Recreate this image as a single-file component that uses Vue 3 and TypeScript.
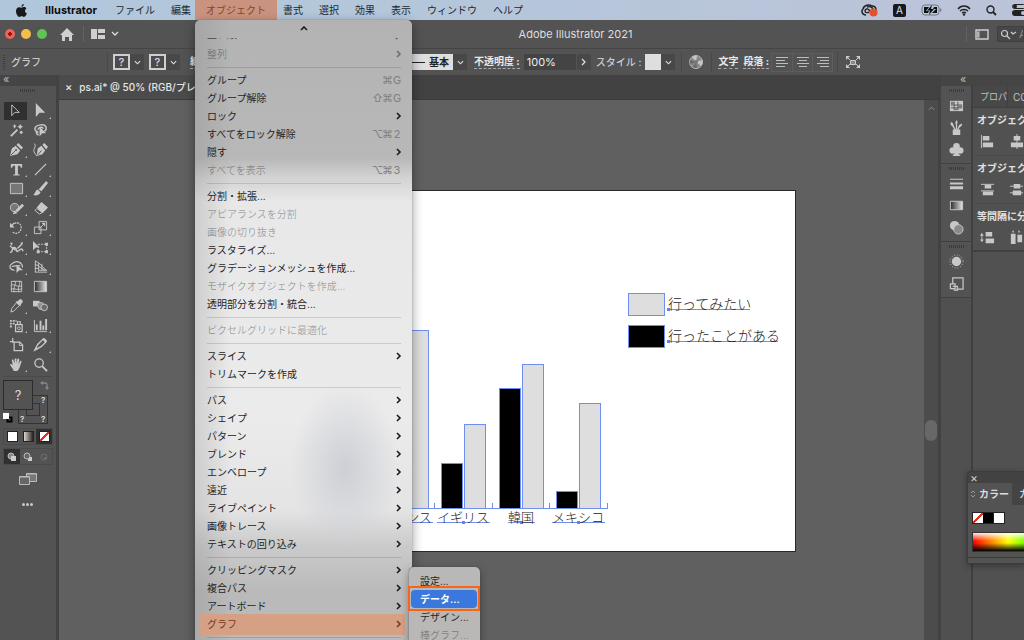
<script setup lang="ts">
interface MenuRow {
  label?: string
  keys?: string[]
  sub?: boolean
  off?: boolean
  hot?: boolean
  line?: boolean
}

const line: MenuRow = { line: true }
const rows: MenuRow[] = [
  { label: '整列', sub: true, off: true },
  line,
  { label: 'グループ', keys: ['⌘', 'G'] },
  { label: 'グループ解除', keys: ['⇧', '⌘', 'G'] },
  { label: 'ロック', sub: true },
  { label: 'すべてをロック解除', keys: ['⌥', '⌘', '2'] },
  { label: '隠す', sub: true },
  { label: 'すべてを表示', keys: ['⌥', '⌘', '3'], off: true },
  line,
  { label: '分割・拡張...' },
  { label: 'アピアランスを分割', off: true },
  { label: '画像の切り抜き', off: true },
  { label: 'ラスタライズ...' },
  { label: 'グラデーションメッシュを作成...' },
  { label: 'モザイクオブジェクトを作成...', off: true },
  { label: '透明部分を分割・統合...' },
  line,
  { label: 'ピクセルグリッドに最適化', off: true },
  line,
  { label: 'スライス', sub: true },
  { label: 'トリムマークを作成' },
  line,
  { label: 'パス', sub: true },
  { label: 'シェイプ', sub: true },
  { label: 'パターン', sub: true },
  { label: 'ブレンド', sub: true },
  { label: 'エンベロープ', sub: true },
  { label: '遠近', sub: true },
  { label: 'ライブペイント', sub: true },
  { label: '画像トレース', sub: true },
  { label: 'テキストの回り込み', sub: true },
  line,
  { label: 'クリッピングマスク', sub: true },
  { label: '複合パス', sub: true },
  { label: 'アートボード', sub: true },
  { label: 'グラフ', sub: true, hot: true },
  line,
]

const menusBefore = ['ファイル', '編集']
const menusAfter = ['書式', '選択', '効果', '表示', 'ウィンドウ', 'ヘルプ']

const f = 'fill="currentColor" stroke="none"'
interface Tool { name: string; art: string; more?: boolean }
const tools: Tool[] = [
  { name: '選択', art: '<path d="M4 2v11.500l3.200-3.500H12z"/>' },
  { name: 'ダイレクト選択', art: `<path ${f} d="M3 0v15l4-4.500H13z"/>`, more: true },
  { name: '自動選択', art: `<path stroke-width="2" d="M2 14l7-7"/><path ${f} d="M11 3l1-2 1 2 2 1-2 1-1 2-1-2-2-1zM5 3l1-2 1 2 1 0-1 1-1 2-1-2-1-1zM12 9l1-1 1 1 1 1-1 1-1 1-1-1-1-1z"/>` },
  { name: 'なげなわ', art: `<path stroke-width="1.600" d="M6 10C2 9 1 6 3 4s8-3 10-1 1 5-1 6M5 7c2-3 5-3 6-1M4 9c-1 1 0 3 2 4"/><path ${f} d="M7 4v10l3-3h4z"/>` },
  { name: 'ペン', art: `<path ${f} d="M1 15l2-8 4-3 5 5-3 4zM8 3l2-2 5 5-2 2z"/><path stroke="#535353" d="M2 14l5-5"/><circle cx="7.500" cy="8.500" r="1" fill="#535353" stroke="none"/>`, more: true },
  { name: '曲線', art: `<path ${f} d="M4 15l1-8 4-3 4 5-3 4zM10 3l2-2 4 4-2 3z"/><path stroke="#535353" d="M5 14l4-5"/><path d="M1 2c4 1-1 5 0 8s2 3 3 5"/>` },
  { name: '文字', art: `<path ${f} d="M2 2h12v4h-1.500L12 4H9.500v9l2 .5V14.500h-7V13.500l2-.5V4H4l-.5 2H2z"/>`, more: true },
  { name: '直線', art: '<path stroke-width="1.300" d="M2 14L14 2"/>', more: true },
  { name: '長方形', art: '<path fill="#777" d="M1.500 2.500h13v11h-13z"/>', more: true },
  { name: 'ブラシ', art: `<path ${f} d="M14 0l2 2-7 9-3-2zM5 9l3 3c-1 3-4 4-8 3 3-2 2-5 5-6z"/>`, more: true },
  { name: 'Shaper', art: `<circle cx="6" cy="7" r="4.500" fill="#777"/><path stroke-width="3" d="M8 11l7-7"/><path ${f} d="M6 10l3 3-5 1z"/>`, more: true },
  { name: '消しゴム', art: `<path ${f} d="M9 1l7 6-6 6-6-6z"/><path d="M4 8l-2 2 5 4 3-2z"/>`, more: true },
  { name: '回転', art: `<path stroke-dasharray="2 1" stroke-width="1.300" d="M4 13c4 3 9 0 9-5 0-3-2-5-5-5"/><path stroke-width="1.300" d="M8 3C5 3 4 4 3 6"/><path ${f} d="M1 3v5h5z"/>`, more: true },
  { name: '拡大・縮小', art: `<path d="M6.500 1.500h8v9h-8zM1.500 7.500h7v7h-7zM7 9l5-5"/><path ${f} d="M9 3h4v4z"/>`, more: true },
  { name: '線幅', art: `<path stroke-width="1.500" d="M1 13c4 1 1-6 5-5s0 7 5 3c2-2 3-2 4 1M1 6l4 4M9 9l5-5"/><path ${f} d="M1 3l3 0-1 3zM3 8h4v4zM12 3l3-1-1 3z"/>`, more: true },
  { name: '自由変形', art: `<path stroke-dasharray="2 1" d="M5.500 4.500h9v8h-9z"/><path ${f} d="M0 1v10l3-3h4zM13 3h3v3h-3zM13 11h3v3h-3zM4 11h3v3H4z"/>`, more: true },
  { name: 'シェイプ形成', art: `<path stroke-width="1.300" d="M6 12C1 12 0 8 2 6s5-4 8-3 5 4 4 6M3 8c3-1 6-1 9-1" /><path ${f} d="M8 6v9l3-3h4z"/>`, more: true },
  { name: '遠近グリッド', art: `<path d="M2.500 2v12M2 2l4 2v9M2 6l4 1M2 10h4M9.500 5v7M6 4l8 8M2 14h13M6 8l7 4M6 12h9"/>`, more: true },
  { name: 'メッシュ', art: '<path d="M2.500 2.500h11v11h-11zM2 7c4-3 7 3 12 0M2 11c4-2 7 2 12-1M6 2c3 4-3 7 0 12M11 2c2 4-3 7 0 12"/>' },
  { name: 'グラデーション', art: '<path fill="url(#toolGrad)" d="M1.500 2.500h13v11h-13z"/>' },
  { name: 'スポイト', art: `<path d="M8 5l3 3-6 6-3 1 1-4z"/><path ${f} d="M10 3c1-2 3-2 4-1s1 3-1 4l-1 3-5-5z"/>`, more: true },
  { name: 'ブレンド', art: `<path ${f} d="M0 3h7v6H0z"/><path fill="#8d8d8d" d="M5 5h5l2 2v5H7L5 9z"/><circle cx="12" cy="10" r="3.500" fill="#6b6b6b"/>` },
  { name: 'シンボルスプレー', art: `<path stroke-width="1.300" d="M7 7h7v7.500H7zM9 4h3v3H9z"/><circle cx="10.500" cy="11" r="1.500"/><path ${f} d="M1 2h2v2H1zM4 2h2v2H4zM1 5h2v2H1zM4 5h2v2H4zM1 8h2v2H1zM7 2h1v2H7z"/>`, more: true },
  { name: '棒グラフ', art: `<path d="M1.500 2v12.500H15"/><path ${f} d="M3 7h2v6H3zM7 3h2v10H7zM10 8h2v5h-2zM13 1h2v12h-2z"/>`, more: true },
  { name: 'アートボード', art: '<path stroke-width="1.300" d="M4 1v5M1 5h4M5.500 5.500h6l3 3v6h-9z" /><path d="M11 5v4h4"/>' },
  { name: 'スライス', art: `<path stroke-width="1.400" d="M2 14l3-6 6-6 3 3-5 5z"/><path ${f} d="M10 2l2-1 3 3-2 2zM1 15l2-4 2 2z"/>`, more: true },
  { name: '手のひら', art: `<path ${f} d="M5 15C4 12 2 10 1 8c1-1 2 0 3 1L3 3c1-1 2 0 2 1l1 3V2c1-1 2-1 2 0v5l1-5c1-1 2 0 2 1l-1 5 2-4c1 0 2 0 1 2l-2 6-2 3z"/>`, more: true },
  { name: 'ズーム', art: '<circle cx="6.500" cy="6.500" r="4.500" stroke-width="1.400"/><path stroke-width="2" d="M10 10l5 5"/>' },
]

const dock: { name: string; art: string }[][] = [
  [
    { name: 'スウォッチ', art: `<path ${f} d="M1 3h14v11H1z"/><path stroke="#535353" d="M5.500 4v9M9.500 4v9M2 7.500h12M2 10.500h12"/><path fill="#777" stroke="none" d="M2 4h3v3H2zM10 8h4v2h-4zM6 11h3v2H6z"/>` },
    { name: 'ブラシ', art: `<path ${f} d="M4 10h8v6H4zM2 2c3 1 3 3 3 5h-1C2 6 1 4 2 2zM8 0c2 2 1 4 0 5C6 4 7 2 8 0zM14 4c0 3-2 3-3 4l-1-1c1-2 2-3 4-3z"/><path stroke-width="1.400" d="M4 6l3 5M8 4v6M11 7l-2 4"/>` },
    { name: 'シンボル', art: `<circle ${f} cx="8" cy="4.500" r="3.500"/><circle ${f} cx="4" cy="9" r="3.500"/><circle ${f} cx="12" cy="9" r="3.500"/><path ${f} d="M7 7h2c0 4 1 6 3 7v1H4v-1c2-1 3-3 3-7z"/>` },
  ],
  [
    { name: '線', art: `<path ${f} d="M1 3h14v1H1zM1 7h14v2H1zM1 11h14v3H1z"/>` },
    { name: 'グラデーション', art: '<path fill="url(#toolGrad)" d="M1.500 3.500h13v9h-13z"/>' },
    { name: '透明', art: `<circle ${f} cx="6" cy="6" r="5"/><circle cx="10" cy="10" r="5" fill="#8a8a8a"/>` },
  ],
  [
    { name: 'アピアランス', art: `<circle ${f} cx="8" cy="8" r="5"/><circle cx="8" cy="8" r="7" stroke-dasharray="1 2"/>` },
    { name: 'アセット', art: '<path stroke-width="1.300" d="M4 8V2h11v12H8M1.500 8.500h5v5h-5zM4 11h5v4H5"/>' },
  ],
]

const alignSets = [
  {
    title: 'オブジェクトの整列',
    icons: [`<path d="M1.500 1v14"/><path ${f} d="M3 2h7v5H3zM3 9h11v5H3z"/>`, `<path d="M8.500 0v16"/><path ${f} d="M5 2h7v5H5zM2 9h13v5H2z"/>`],
  },
  {
    title: 'オブジェクトの分布',
    icons: [`<path d="M1 2.500h14M1 9.500h14"/><path ${f} d="M5 3h7v4H5zM3 10h11v4H3z"/>`, `<path d="M1 4.500h14M1 11.500h14"/><path ${f} d="M5 2h7v5H5zM4 9h9v5H4z"/>`],
  },
  {
    title: '等間隔に分布',
    icons: [`<path ${f} d="M6 2h7v5H6zM6 9h9v5H6zM0 6l2-3 2 3zM0 10l2 3 2-3z"/><path d="M2 5v6"/>`, `<path ${f} d="M2 4h5v11H2zM9 5h5v8H9zM5 0v3L3 2zM10 0v3l2-1z"/>`],
  },
]

const ground = 317
const bars: { x: number; h: number; been: boolean }[] = [
  { x: 187, h: 178, been: false },
  { x: 221, h: 45, been: true },
  { x: 244, h: 84, been: false },
  { x: 279, h: 120, been: true },
  { x: 302, h: 144, been: false },
  { x: 336, h: 17, been: true },
  { x: 359, h: 105, been: false },
]
const ticks = [214, 272, 329, 387]
const countries = [
  { name: 'フランス', x: 186, w: 53 },
  { name: 'イギリス', x: 243, w: 53 },
  { name: '韓国', x: 301, w: 27 },
  { name: 'メキシコ', x: 358, w: 53 },
]
const legend = [
  { name: '行ってみたい', y: 102, w: 82, been: false },
  { name: '行ったことがある', y: 134, w: 110, been: true },
]
</script>

<template>
  <div class="screen">
    <svg class="defs" aria-hidden="true">
      <defs>
        <linearGradient id="toolGrad"><stop offset="0" stop-color="#2b2b2b" /><stop offset="1" stop-color="#e6e6e6" /></linearGradient>
      </defs>
    </svg>

    <nav class="menubar">
      <svg class="apple" viewBox="0 0 12 14"><path d="M8.500 0c0 1.500-1 3-2.600 3C5.800 1.500 7 .3 8.500 0zM6 4c.7 0 1.500-.7 2.800-.7 1 0 2 .5 2.600 1.400-2.300 1.400-1.900 4.500.5 5.400C11.300 12 10 14 8.700 14 7.700 14 7.300 13.400 6.200 13.400 5 13.400 4.700 14 3.700 14 2 14 0 10.600 0 7.800 0 4.900 1.700 3.400 3.400 3.400 4.500 3.400 5.300 4 6 4z" /></svg>
      <button class="app">Illustrator</button>
      <button v-for="m in menusBefore" :key="m">{{ m }}</button>
      <div class="open">
        <button class="active" aria-haspopup="menu" aria-expanded="true">オブジェクト</button>
        <ul class="menu" role="menu">
          <li class="up"><svg viewBox="0 0 8 5"><path d="M1 4l3-3 3 3" /></svg></li>
          <li class="cut"><span>重ね順</span><svg class="chev" viewBox="0 0 6 8"><path d="M1 1l3 3-3 3" /></svg></li>
          <li v-for="(r, i) in rows" :key="i" :class="{ sep: r.line, off: r.off, hot: r.hot, row: !r.line }">
            <template v-if="!r.line">
              <button role="menuitem">{{ r.label }}</button>
              <svg v-if="r.sub" class="chev" viewBox="0 0 6 8"><path d="M1 1l3 3-3 3" /></svg>
              <span v-if="r.keys" class="keys"><kbd v-for="k in r.keys" :key="k">{{ k }}</kbd></span>
              <ul v-if="r.hot" class="submenu" role="menu">
                <li class="row"><button role="menuitem">設定...</button></li>
                <li class="row picked"><button role="menuitem">データ...</button></li>
                <li class="row"><button role="menuitem">デザイン...</button></li>
                <li class="row off"><button role="menuitem">棒グラフ...</button></li>
              </ul>
            </template>
          </li>
        </ul>
      </div>
      <button v-for="m in menusAfter" :key="m">{{ m }}</button>
      <div class="status">
        <svg width="17" height="14" viewBox="0 0 17 14"><path d="M5 12C1 12 0 8 2 6c1-4 6-5 9-3 2 0 4 1 4 4" fill="none" stroke="#222" stroke-width="1.500" /><path d="M8 9c-1 1-4 1-4-1s3-3 4-1l2 2M6 4c3-1 6 0 6 3" fill="none" stroke="#222" stroke-width="1.400" /><circle cx="12.500" cy="9.500" r="4" fill="#e3532b" /></svg>
        <span class="ime">A</span>
        <svg width="21" height="12" viewBox="0 0 21 12"><rect x="1" y="1" width="17" height="10" rx="3" fill="none" stroke="#6f7b89" /><path d="M3 3h5L5 7h3L7 9H3zM13 3h3v6h-5l4-4h-3z" fill="#111" /><path d="M11 1L6 6.500h3L8 11l5-6h-3z" fill="#111" /><path d="M19 4c2 1 2 3 0 4z" fill="#6f7b89" /></svg>
        <svg width="14" height="11" viewBox="0 0 14 11"><path d="M1 4c3-4 9-4 12 0M3 6c2-2 6-2 8 0M5 8c1-1 3-1 4 0" fill="none" stroke="#222" stroke-width="1.400" /><circle cx="7" cy="9.500" r="1.200" fill="#222" /></svg>
        <svg width="11" height="11" viewBox="0 0 11 11"><path d="M7 7l3 3" stroke="#222" stroke-width="1.800" /><circle cx="4.500" cy="4.500" r="3.500" fill="none" stroke="#222" stroke-width="1.400" /></svg>
        <svg width="14" height="12" viewBox="0 0 14 12"><rect x=".5" y=".5" width="13" height="4" rx="2" fill="none" stroke="#222" /><circle cx="3" cy="2.500" r="2" fill="#222" /><rect x="0" y="6" width="14" height="6" rx="3" fill="#222" /><circle cx="11" cy="9" r="2" fill="#b9c1d6" /></svg>
      </div>
    </nav>

    <header class="titlebar">
      <div class="lights"><i class="red"></i><i class="yellow"></i><i class="green"></i></div>
      <button class="home" aria-label="ホーム"><svg width="14" height="13" viewBox="0 0 14 13"><path d="M7 0l7 7h-2v6H9V9H5v4H2V7H0z" fill="#cfcfcf" /></svg></button>
      <span class="rule"></span>
      <button class="arrange" aria-label="レイアウト"><svg width="28" height="10" viewBox="0 0 28 10"><path d="M0 0h6v10H0zM7 0h7v4H7zM7 6h7v4H7z" fill="#cfcfcf" /><path d="M21 3l3 3 3-3" fill="none" stroke="#ddd" stroke-width="1.300" /></svg></button>
      <h1>Adobe Illustrator 2021</h1>
      <span class="rule"></span>
      <button class="workspace-btn" aria-label="ワークスペース"><svg width="14" height="11" viewBox="0 0 14 11"><path d="M1 1h12v9H1z" fill="none" stroke="#cfcfcf" stroke-width="1.400" /><path d="M2 2h3v7H2z" fill="#888" /><path d="M3 3v5" stroke="#ddd" /></svg></button>
      <label class="search"><svg width="17" height="11" viewBox="0 0 17 11"><circle cx="4.500" cy="4.500" r="3" fill="none" stroke="#ccc" stroke-width="1.200" /><path d="M7 7l3 3M11 3l2 2 3-2" fill="none" stroke="#ccc" stroke-width="1.300" /></svg><input placeholder="Adobe" aria-label="検索" /></label>
    </header>

    <div class="control">
      <span class="grip"></span>
      <span class="kind">グラフ</span>
      <span class="rule"></span>
      <button class="paint"><b>?</b><i><svg viewBox="0 0 8 5"><path d="M1 1l3 3 3-3" /></svg></i></button>
      <button class="paint"><b>?</b><i><svg viewBox="0 0 8 5"><path d="M1 1l3 3 3-3" /></svg></i></button>
      <div class="stroke">
        <label class="key" for="profile">線 :</label>
        <span class="profile"><span class="bar"></span><select id="profile"><option>基本</option></select><i><svg viewBox="0 0 8 5"><path d="M1 1l3 3 3-3" /></svg></i></span>
      </div>
      <label class="key" for="opacity">不透明度 :</label>
      <span class="opacity"><input id="opacity" value="100%" /><button aria-label="不透明度を開く"><svg viewBox="0 0 5 8"><path d="M1 1l3 3-3 3" /></svg></button></span>
      <span class="kind style-label">スタイル :</span>
      <button class="paint solid" aria-label="スタイル"><b></b><i><svg viewBox="0 0 8 5"><path d="M1 1l3 3 3-3" /></svg></i></button>
      <span class="rule"></span>
      <button class="globe" aria-label="オブジェクトを再配色"><svg width="14" height="14" viewBox="0 0 14 14"><circle cx="7" cy="7" r="6.500" fill="#888" stroke="#b9b9b9" /><path d="M7 7L3 2a6 6 0 0 1 5-1zM7 7l6-2a6 6 0 0 1-1 6z" fill="#c6c6c6" /><path d="M7 7L1 9a6 6 0 0 1 0-4zM7 7l1 6a6 6 0 0 1-4-1z" fill="#6a6a6a" /><circle cx="7" cy="7" r="2" fill="#777" /></svg></button>
      <span class="rule"></span>
      <button class="key">文字</button>
      <button class="key para">段落 :</button>
      <div class="aligns">
        <button aria-label="左揃え"><svg viewBox="0 0 14 12"><path d="M1 1.500h12M1 4.500h9M1 7.500h12M1 10.500h9" /></svg></button>
        <button aria-label="中央揃え"><svg viewBox="0 0 14 12"><path d="M1 1.500h12M3 4.500h8M1 7.500h12M3 10.500h8" /></svg></button>
        <button aria-label="右揃え"><svg viewBox="0 0 14 12"><path d="M1 1.500h12M4 4.500h9M1 7.500h12M4 10.500h9" /></svg></button>
      </div>
      <span class="rule"></span>
      <button class="fit" aria-label="変形"><svg width="14" height="12" viewBox="0 0 14 12"><path d="M4.500 4.500h5v4h-5z" fill="#888" stroke="#ccc" /><path d="M0 0h4L0 4zM14 0h-4l4 4zM0 12h4L0 8zM14 12h-4l4-4z" fill="#ccc" /><path d="M1 1l3 3M13 1l-3 3M1 11l3-3M13 11l-3-3" stroke="#ccc" /></svg></button>
    </div>

    <main class="work">
      <aside class="tools">
        <div class="strip">«</div>
        <div class="dots"></div>
        <div class="grid">
          <button v-for="(t, i) in tools" :key="t.name" :class="{ on: i === 0, more: t.more }" :aria-label="t.name">
            <svg class="ico" viewBox="0 0 16 16" v-html="t.art"></svg>
          </button>
        </div>
        <div class="paints">
          <span class="outline"><i></i></span>
          <span class="fill">?</span>
          <span class="q q1">?</span><span class="q q2">?</span><span class="q q3">?</span>
          <svg class="swap" viewBox="0 0 9 9"><path d="M2 2h3c2 0 2 1 2 4" fill="none" stroke="#888" stroke-width="1.300" /><path d="M0 2l3-2v4zM7 9L5 6h4z" fill="#888" /></svg>
          <svg class="reset" viewBox="0 0 10 10"><path d="M4.500 4.500h4v4h-4z" fill="none" stroke="#000" stroke-width="2" /><path d="M0 0h6v6H0z" fill="#fff" /></svg>
        </div>
        <div class="trio">
          <button aria-label="カラー"><i class="white"></i></button>
          <button aria-label="グラデーション"><i class="grad"></i></button>
          <button aria-label="なし" class="on"><i class="none"></i></button>
        </div>
        <div class="trio">
          <button aria-label="標準描画" class="on"><svg viewBox="0 0 10 10"><circle cx="4" cy="4" r="3" fill="#888" stroke="#bbb" /><path d="M4 4h5v5H4z" fill="#ccc" /></svg></button>
          <button aria-label="背面描画"><svg viewBox="0 0 10 10"><path d="M5 5h4v4H5z" fill="#ccc" /><circle cx="4" cy="4" r="3" fill="#666" stroke="#bbb" /></svg></button>
          <button aria-label="内側描画"><svg viewBox="0 0 10 10"><circle cx="5" cy="5" r="3" fill="none" stroke="#6d6d6d" /><path d="M5 5h2v2H5z" fill="#6d6d6d" /></svg></button>
        </div>
        <button class="mode" aria-label="スクリーンモード"><svg width="18" height="14" viewBox="0 0 18 14"><path d="M7.500 1.500h10v8h-10z" fill="#777" stroke="#bbb" /><path d="M.5 4.500h10v8H.5z" fill="#666" stroke="#bbb" /><path d="M7 2h11M0 5h10" stroke="#bbb" /></svg></button>
        <button class="ellipsis" aria-label="ツールバーを編集"><i></i><i></i><i></i></button>
      </aside>

      <section class="doc">
        <div class="tabs"><button class="tab"><span>×</span>ps.ai* @ 50% (RGB/プレビュー)</button></div>
        <div class="view">
          <div class="canvas">
            <div class="artboard">
              <svg width="575" height="360" viewBox="0 0 575 360">
                <g shape-rendering="crispEdges" stroke="#6f8ff0">
                  <rect v-for="b in bars" :key="b.x" :x="b.x" :y="ground - b.h" width="21" :height="b.h" :fill="b.been ? '#000' : '#dedede'" />
                  <path :d="`M0 ${ground}H388`" />
                  <path v-for="t in ticks" :key="t" :d="`M${t} ${ground}v-5`" />
                  <path v-for="c in countries" :key="c.name" :d="`M${c.x - Math.floor(c.w / 2)} 331h${c.w}`" />
                  <g v-for="l in legend" :key="l.name">
                    <rect x="408" :y="l.y" width="36" height="22" :fill="l.been ? '#000' : '#dedede'" />
                    <path :d="`M448 ${l.y + 16}h${l.w}`" />
                  </g>
                </g>
                <g fill="#5c82f5">
                  <rect v-for="c in countries" :key="c.name" :x="c.x - 1" y="330" width="3" height="3" />
                  <rect v-for="l in legend" :key="l.name" x="447" :y="l.y + 15" width="3" height="3" />
                </g>
                <text v-for="c in countries" :key="c.name" :x="c.x" y="331" text-anchor="middle" class="country">{{ c.name }}</text>
                <text v-for="l in legend" :key="l.name" x="448" :y="l.y + 16" class="legend">{{ l.name }}</text>
              </svg>
            </div>
          </div>
          <div class="scroll"><svg viewBox="0 0 8 5"><path d="M1 4l3-3 3 3" /></svg><i></i></div>
        </div>
      </section>

      <aside class="side">
        <div class="strip">«</div>
        <div class="cols">
          <div class="dock">
            <div v-for="(g, i) in dock" :key="i" class="group">
              <span class="dots"></span>
              <button v-for="d in g" :key="d.name" :aria-label="d.name"><svg class="ico" viewBox="0 0 16 16" v-html="d.art"></svg></button>
            </div>
          </div>
          <div class="panels">
            <div class="ptabs"><button>プロパティ</button><button>CCライブラリ</button></div>
            <div v-for="s in alignSets" :key="s.title" class="set">
              <h2>{{ s.title }}</h2>
              <div class="icons"><button v-for="(a, i) in s.icons" :key="i" :aria-label="s.title"><svg class="ico" viewBox="0 0 16 16" v-html="a"></svg></button></div>
            </div>
          </div>
        </div>
      </aside>

      <div class="color">
        <button class="close" aria-label="閉じる">×</button>
        <div class="ctabs"><button class="on"><svg width="6" height="8" viewBox="0 0 6 8"><path d="M1 3l2-2 2 2M1 5l2 2 2-2" fill="none" stroke="#999" /></svg>カラー</button><button>カラーガイド</button></div>
        <div class="chips"><i class="none"></i><i class="black"></i><i class="white"></i></div>
        <div class="spectrum"></div>
        <div class="foot"></div>
      </div>
    </main>
  </div>
</template>

<style>
html, body { margin: 0; background: #606060; }
</style>

<style scoped>
.screen {
  position: relative;
  display: flex;
  flex-direction: column;
  height: 100vh;
  overflow: hidden;
  background: #535353;
  color: #dcdcdc;
  font: 10px/18px Inter, "Noto Sans CJK JP", sans-serif;
  white-space: nowrap;
}
.screen * { box-sizing: border-box; }
.defs { position: absolute; width: 0; height: 0; }
button, input, select {
  margin: 0;
  padding: 0;
  border: 0;
  background: none;
  color: inherit;
  font: inherit;
  border-radius: 0;
  appearance: none;
  white-space: nowrap;
}
svg { display: block; flex: none; }
ul { margin: 0; padding: 0; list-style: none; }

.menubar {
  position: relative;
  z-index: 5;
  display: flex;
  align-items: center;
  flex: none;
  height: 20px;
  padding: 0 0 0 16px;
  background: linear-gradient(90deg, #b0c7db, #b6c6da 55%, #bcc3d9);
  color: #22262b;
}
.menubar > button { padding: 0 8px; line-height: 20px; }
.apple { width: 11px; height: 13px; margin-right: 10px; fill: #16181b; }
.menubar > .app { font-size: 11px; font-weight: 700; color: #0b0c0e; width: 70px; text-align: left; }
.open { position: relative; margin: 0 -2px 0 -4px; }
.active { display: block; height: 20px; padding: 0 11px; background: #c9937f; color: #87432a; }
.status { display: flex; align-items: center; gap: 15px; margin-left: auto; margin-right: -2px; }
.ime { width: 13px; height: 13px; border-radius: 2px; background: #17191c; color: #dbe2ee; line-height: 13px; text-align: center; }

.menu {
  position: absolute;
  top: 20px;
  left: 0;
  width: 217px;
  padding-bottom: 20px;
  border-radius: 5px 5px 0 0;
  background:
    radial-gradient(ellipse 54px 84px at 150px 448px, rgba(200, 201, 208, .8), rgba(206, 208, 215, .5) 50%, transparent),
    linear-gradient(90deg, rgba(120, 120, 120, .24), transparent 36px),
    linear-gradient(#b3b3b3, #b8b8b8 138px, #d2d2d2 157px, #e8e8e8 182px, #ebebeb 400px, #e4e4e5 490px, #cbcbcb 525px, #bababa 570px, #b9b9b9);
  box-shadow: 0 0 1px #444, 0 4px 12px rgba(0, 0, 0, .4);
  color: #1f1f1f;
}
.menu .chev { width: 6px; height: 8px; margin-left: auto; }
.menu path { fill: none; stroke: #1a1a1a; stroke-width: 1.600; }
.up { display: flex; justify-content: center; height: 18px; padding-top: 6px; }
.up svg { width: 8px; height: 5px; }
.cut { display: flex; align-items: flex-end; height: 7px; padding: 0 11px 0 12px; overflow: hidden; color: #444; }
.cut span { height: 14px; margin-bottom: 4px; line-height: 14px; }
.cut .chev { margin-bottom: 5px; opacity: .6; }
.row { position: relative; display: flex; align-items: center; height: 18px; padding: 0 10px 0 12px; line-height: 18px; }
.row button { line-height: 18px; text-align: left; }
.off > button { color: rgba(0, 0, 0, .32); }
.off > .chev { opacity: .45; }
.sep { height: 8px; padding: 4px 11px 0 12px; }
.sep::before { content: ""; display: block; height: 1px; background: rgba(0, 0, 0, .13); }
.keys { display: flex; margin-left: auto; color: #808080; }
.keys kbd { width: 10px; text-align: center; font: 11px/18px Inter, "DejaVu Sans", sans-serif; }
.hot > button { color: #743b20; }
.hot > .chev path { stroke: #743b20; }
.hot::before { content: ""; position: absolute; z-index: 0; inset: -1px 7px -2px 5px; background: #d6a084; }
.hot > * { position: relative; }
.row > .submenu {
  position: absolute;
  top: -48px;
  left: 214px;
  width: 71px;
  height: 90px;
  padding-top: 5px;
  border-radius: 5px;
  background: #b9b8b6;
  box-shadow: 0 0 1px #333, 0 3px 8px rgba(0, 0, 0, .35);
}
.submenu .row { padding-left: 11px; }
.submenu .picked { margin: 0 3px 0 2px; padding-left: 9px; border-radius: 4px; background: #3b78de; color: #fff; font-weight: 600; }
.submenu .picked::after { content: ""; position: absolute; inset: -4px -3px -3px -3px; border: 2px solid #f5661b; }

.titlebar { display: flex; align-items: center; flex: none; height: 29px; border-bottom: 1px solid #454545; background: #535353; }
.lights { display: flex; gap: 6px; padding-left: 5px; }
.lights i { width: 10px; height: 10px; border-radius: 50%; }
.red { background: radial-gradient(circle, #8a1a12 2px, #ee6257 2px); }
.yellow { background: #f5bd4c; }
.green { background: #5fc454; }
.home { margin: 0 9px 0 13px; }
.rule { flex: none; width: 1px; height: 16px; background: #636363; }
.arrange { margin-left: 7px; }
h1 { flex: 1; margin: 0; padding-left: 66px; font-size: 11px; font-weight: 400; line-height: 28px; text-align: center; color: #dedede; }
.workspace-btn { margin: 0 8px 0 8px; }
.search { display: flex; align-items: center; flex: none; width: 27px; height: 16px; padding-left: 2px; border: 1px solid #404040; background: #474747; overflow: hidden; }
.search input { width: 40px; flex: none; padding-left: 2px; font-size: 11px; }
.search input::placeholder { color: #8c8c8c; opacity: 1; }

.control { display: flex; align-items: center; flex: none; height: 26px; background: #535353; }
.control svg { flex: none; }
.control i { display: flex; align-items: center; justify-content: center; width: 14px; height: 16px; background: #484848; }
.control i svg { width: 7px; height: 5px; }
.control i path, .opacity path { fill: none; stroke: #ddd; stroke-width: 1.300; }
.control .rule { background: #484848; height: 20px; }
.grip { width: 2px; height: 15px; margin: 0 6px 0 3px; background: repeating-linear-gradient(#3e3e3e 0 1px, transparent 1px 2px); }
.kind { color: #e0e0e0; }
.kind + .rule { margin: 0 5px 0 66px; }
.paint { display: flex; margin-right: 5px; }
.paint b { width: 17px; height: 16px; border: 2px solid #cfcfcf; font-size: 11px; font-weight: 500; line-height: 12px; text-align: center; background: #4b4b4b; }
.solid { margin-right: 6px; }
.solid b { width: 16px; border: 0; background: #dedede; }
.stroke { display: flex; justify-content: space-between; align-items: center; width: 282px; padding-left: 5px; }
.key { font-weight: 700; line-height: 13px; border-bottom: 1px dashed #aaa; color: #e8e8e8; }
.profile { display: flex; align-items: center; width: 90px; height: 16px; background: #dedede; color: #222; }
.profile .bar { flex: 1; margin: 0 4px 0 12px; height: 1px; background: #222; }
.profile select { width: 24px; font-weight: 700; line-height: 16px; }
.stroke + .key { margin: 0 4px 0 7px; }
.opacity { display: flex; gap: 1px; }
.opacity input { width: 52px; height: 16px; padding-left: 3px; background: #444; color: #eee; font-size: 11px; }
.opacity button { display: flex; align-items: center; justify-content: center; width: 14px; height: 16px; background: #484848; }
.opacity svg { width: 5px; height: 8px; }
.style-label { margin: 0 4px 0 5px; }
.globe { margin: 0 8px 0 7px; }
.globe + .rule { margin-right: 6px; }
.para { margin: 0 2px 0 5px; }
.aligns { display: flex; border: 1px solid #5d5d5d; }
.aligns button { display: flex; align-items: center; justify-content: center; width: 20px; height: 17px; }
.aligns button + button { border-left: 1px solid #5d5d5d; }
.aligns svg { width: 14px; height: 12px; }
.aligns path { stroke: #bdbdbd; fill: none; }
.aligns + .rule { margin: 0 8px 0 4px; }

.work { position: relative; display: flex; flex: 1; min-height: 0; }
.strip { flex: none; height: 11px; background: #454545; color: #b5b5b5; font-size: 11px; line-height: 9px; }
.tools { display: flex; flex-direction: column; align-items: flex-start; flex: none; width: 59px; border-right: 3px solid #424242; }
.tools .strip { align-self: stretch; padding-left: 3px; }
.dots { width: 15px; height: 3px; background: repeating-linear-gradient(90deg, #3b3b3b 0 1px, transparent 1px 2px); }
.tools .dots { margin: 3px 0 9px 20px; }
.ico { width: 15px; height: 15px; fill: none; stroke: #c8c8c8; color: #c8c8c8; }
.grid { display: grid; grid-template-columns: 24px 24px; grid-template-rows: repeat(14, 1fr); height: 273px; margin-left: 4px; }
.grid button { position: relative; display: flex; align-items: center; justify-content: center; }
.grid .on { background: #303030; margin: 1px 1px 1px 0; }
.more::after { content: ""; position: absolute; right: 1px; bottom: 2px; border: 1px solid #bbb; border-left-color: transparent; border-top-color: transparent; }
.paints { position: relative; align-self: stretch; height: 49px; margin: 2px 3px 3px; border-top: 1px solid #4a4a4a; }
.fill, .outline, .q, .swap, .reset { position: absolute; }
.fill { left: 0; top: 3px; width: 30px; height: 30px; border: 1px solid #2c2c2c; background: #535353; font-size: 13px; line-height: 28px; text-align: center; }
.outline { left: 15px; top: 18px; width: 30px; height: 29px; border: 1px solid #333; }
.outline i { position: absolute; inset: 7px; border: 1px solid #333; }
.q { font-size: 8px; font-weight: 600; line-height: 10px; }
.q1 { left: 38px; top: 18px; }
.q2 { left: 17px; top: 37px; }
.q3 { left: 38px; top: 37px; }
.swap { left: 37px; top: 4px; width: 9px; height: 9px; }
.reset { left: 0; top: 36px; width: 10px; height: 10px; }
.trio { display: flex; margin: 0 0 3px 3px; border: 1px solid #4b4b4b; }
.trio button { display: flex; align-items: center; justify-content: center; width: 16px; height: 15px; }
.trio .on { background: #303030; }
.trio svg { width: 10px; height: 10px; }
.trio i { width: 11px; height: 11px; border: 1px solid #222; }
.white { background: #fff; }
.black { background: #000; }
.grad { background: linear-gradient(90deg, #dcd6d2, #2b2422); }
.none { background: linear-gradient(to bottom right, #fff 42%, #e62e1f 42% 58%, #fff 58%); }
.mode { margin: 4px 0 0 19px; }
.ellipsis { display: flex; gap: 1px; margin: 17px 0 0 22px; }
.ellipsis i { width: 3px; height: 3px; border-radius: 50%; background: #c8c8c8; }

.doc { display: flex; flex-direction: column; flex: 1; min-width: 0; }
.tabs { flex: none; height: 25px; border-bottom: 1px solid #3d3d3d; background: #424242; }
.tab { height: 24px; padding: 0 6px; color: #e6e6e6; font-weight: 500; background: #4b4b4b; }
.tab span { margin-right: 7px; font-size: 11px; }
.view { display: flex; flex: 1; min-height: 0; }
.canvas { position: relative; flex: 1; overflow: hidden; background: #606060; }
.artboard { position: absolute; left: 161px; top: 91px; background: #fff; box-shadow: 0 0 0 1px #2a2a2a; }
.artboard text { font-family: "Noto Sans CJK JP", sans-serif; font-weight: 300; fill: #222; }
.country { font-size: 13px; }
.legend { font-size: 14px; }
.scroll { position: relative; flex: none; width: 17px; padding: 6px 4px; border-right: 3px solid #424242; background: #4c4c4c; }
.scroll svg { width: 7px; height: 5px; }
.scroll path { fill: none; stroke: #999; }
.scroll i { position: absolute; left: 1px; top: 320px; width: 12px; height: 21px; border-radius: 6px; background: #686868; }

.side { display: flex; flex-direction: column; flex: none; width: 83px; overflow: hidden; }
.side .strip { padding-left: 19px; }
.cols { display: flex; flex: 1; min-height: 0; }
.dock { flex: none; width: 32px; border-right: 2px solid #404040; background: #505050; }
.group { display: flex; flex-direction: column; align-items: center; padding: 3px 0 6px; gap: 7px; border-bottom: 1px solid #404040; background: #535353; }
.group .dots { margin-bottom: -1px; }
.panels { flex: 1; min-width: 0; overflow: hidden; background: #515151; }
.ptabs { display: flex; height: 22px; background: #484848; border-bottom: 1px solid #404040; }
.ptabs button { flex: none; width: 35px; padding-left: 7px; overflow: hidden; font-size: 9px; text-align: left; border-right: 1px solid #404040; color: #c4c4c4; }
.ptabs button + button { padding-left: 5px; font-size: 10px; }
.set { height: 48px; padding: 3px 0 0 4px; border-bottom: 1px solid #4b4b4b; }
.set:last-child { border-bottom: 2px solid #404040; }
h2 { margin: 0 0 5px; font-size: 10px; font-weight: 600; line-height: 18px; color: #e0e0e0; }
.icons { display: flex; gap: 14px; padding-left: 3px; }
.icons button { flex: none; }

.color { position: absolute; z-index: 2; right: 0; bottom: 76px; width: 57px; border: 1px solid #3c3c3c; border-right: 0; border-radius: 4px 0 0 0; background: #535353; box-shadow: 0 2px 6px rgba(0, 0, 0, .35); overflow: hidden; }
.close { display: block; width: 100%; height: 11px; padding-left: 2px; background: #424242; color: #ccc; font-size: 12px; line-height: 11px; text-align: left; }
.ctabs { display: flex; height: 22px; background: #444; }
.ctabs button { flex: none; padding: 0 7px; font-weight: 500; }
.ctabs .on { display: flex; align-items: center; gap: 3px; width: 44px; padding: 0 3px 0 2px; background: #535353; font-weight: 700; }
.chips { display: flex; width: 33px; margin: 7px 0 8px 4px; border: 1px solid #222; }
.chips i { width: 10px; height: 10px; flex: 1; }
.chips .white { border-left: 1px solid #222; }
.spectrum { height: 20px; margin-left: 4px; border: 1px solid #333; border-right: 0; background: linear-gradient(rgba(255, 255, 255, .9), transparent 45%, transparent 55%, #000), linear-gradient(90deg, #f00, #ff0 35px, #3f0 60px); }
.foot { height: 6px; margin-top: 5px; border-top: 1px solid #3c3c3c; }
</style>
